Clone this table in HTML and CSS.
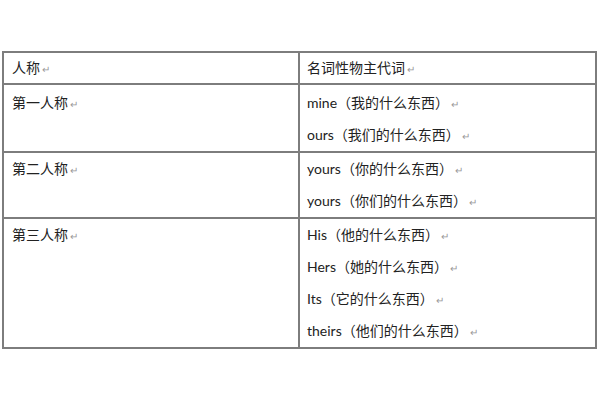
FILE: index.html
```html
<!DOCTYPE html>
<html lang="zh-CN">
<head>
<meta charset="utf-8">
<title>名词性物主代词</title>
<link rel="stylesheet" href="styles.css">
</head>
<body>
<div class="sheet">
  <div class="cell left head"><span>人称</span><span class="ret">↵</span></div>
  <div class="cell right head"><span>名词性物主代词</span><span class="ret">↵</span></div>

  <div class="cell left r1"><span>第一人称</span><span class="ret">↵</span></div>
  <div class="cell right r1">
    <p class="line">mine（我的什么东西）<span class="ret">↵</span></p>
    <p class="line">ours（我们的什么东西）<span class="ret">↵</span></p>
  </div>

  <div class="cell left r2"><span>第二人称</span><span class="ret">↵</span></div>
  <div class="cell right r2">
    <p class="line">yours（你的什么东西）<span class="ret">↵</span></p>
    <p class="line">yours（你们的什么东西）<span class="ret">↵</span></p>
  </div>

  <div class="cell left r3 last"><span>第三人称</span><span class="ret">↵</span></div>
  <div class="cell right r3 last">
    <p class="line">His（他的什么东西）<span class="ret">↵</span></p>
    <p class="line">Hers（她的什么东西）<span class="ret">↵</span></p>
    <p class="line">Its（它的什么东西）<span class="ret">↵</span></p>
    <p class="line">theirs（他们的什么东西）<span class="ret">↵</span></p>
  </div>
</div>
</body>
</html>
```

FILE: styles.css
```css
html, body {
  margin: 0;
  padding: 0;
  background: #ffffff;
}

body {
  font-family: "Lato", "Noto Sans CJK SC", sans-serif;
  font-size: 14px;
  color: #222222;
}

.sheet {
  margin: 51px 0 0 2px;
  width: 595px;
  box-sizing: border-box;
  border: 2px solid #7d7d7d;
  display: grid;
  grid-template-columns: 296px 1fr;
}

.cell {
  box-sizing: border-box;
  border-bottom: 2px solid #7d7d7d;
  line-height: 32px;
}

.cell.last {
  border-bottom: none;
}

.left {
  border-right: 2px solid #7d7d7d;
  padding-left: 8px;
}

.right {
  padding-left: 7px;
  position: relative;
}

.right::after {
  content: "";
  position: absolute;
  right: -7px;
  top: 10px;
  width: 2px;
  height: 5px;
  background: #b5b5b5;
}

.head {
  height: 32px;
  line-height: 30px;
}

.r1 {
  height: 68px;
  padding-top: 2px;
}

.r2 {
  height: 66px;
}

.r3 {
  height: 128px;
}

.line {
  margin: 0;
  height: 32px;
}

.ret {
  font-size: 10px;
  color: #999999;
  margin-left: 2px;
}
```
